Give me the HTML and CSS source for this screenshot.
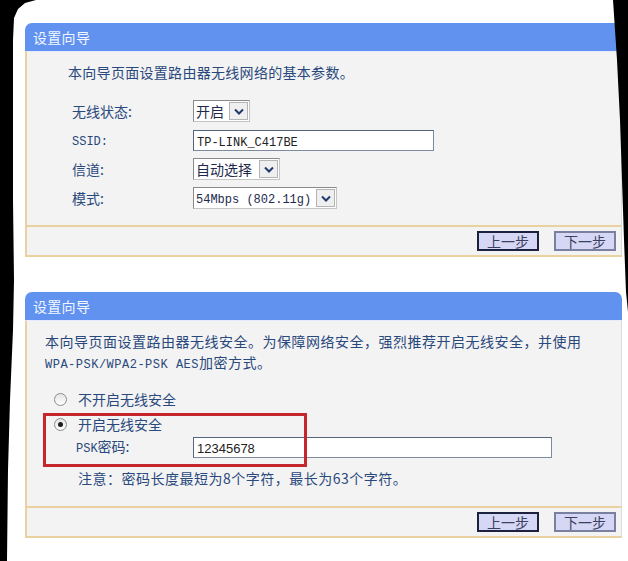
FILE: index.html
```html
<!DOCTYPE html>
<html lang="zh-CN">
<head>
  <meta charset="UTF-8">
  <title>设置向导</title>
  <link rel="stylesheet" href="styles.css">
</head>
<body>

  <div class="page">

    <!-- Step 1: basic wireless settings -->
    <div class="panel">
      <div class="panel-head">设置向导</div>
      <div class="panel-body basic-body">
        <div class="intro">本向导页面设置路由器无线网络的基本参数。</div>
        <div class="form">
          <div class="row">
            <div class="label">无线状态:</div>
            <div class="select sel-state">
              <span class="select-text">开启</span>
              <span class="select-btn"><svg width="10" height="7" viewBox="0 0 10 7"><path d="M1 1.5 L5 5.5 L9 1.5" fill="none" stroke="#1f3a6e" stroke-width="2"/></svg></span>
            </div>
          </div>
          <div class="row">
            <div class="label"><span class="mono">SSID:</span></div>
            <div class="input ssid"><span class="mono">TP-LINK_C417BE</span></div>
          </div>
          <div class="row">
            <div class="label">信道:</div>
            <div class="select sel-channel">
              <span class="select-text">自动选择</span>
              <span class="select-btn"><svg width="10" height="7" viewBox="0 0 10 7"><path d="M1 1.5 L5 5.5 L9 1.5" fill="none" stroke="#1f3a6e" stroke-width="2"/></svg></span>
            </div>
          </div>
          <div class="row">
            <div class="label">模式:</div>
            <div class="select sel-mode">
              <span class="select-text"><span class="mono">54Mbps (802.11g)</span></span>
              <span class="select-btn"><svg width="10" height="7" viewBox="0 0 10 7"><path d="M1 1.5 L5 5.5 L9 1.5" fill="none" stroke="#1f3a6e" stroke-width="2"/></svg></span>
            </div>
          </div>
        </div>
      </div>
      <div class="panel-foot">
        <div class="btn btn-focus">上一步</div>
        <div class="btn">下一步</div>
      </div>
    </div>

    <!-- Step 2: wireless security -->
    <div class="panel">
      <div class="panel-head">设置向导</div>
      <div class="panel-body security-body">
        <div class="intro intro-wide">本向导页面设置路由器无线安全。为保障网络安全，强烈推荐开启无线安全，并使用<br><span class="mono">WPA-PSK/WPA2-PSK AES</span>加密方式。</div>
        <div class="options">
          <div class="option"><span class="radio"></span>不开启无线安全</div>
          <div class="option"><span class="radio checked"></span>开启无线安全</div>
          <div class="row psk-row">
            <div class="label psk-label"><span class="mono">PSK</span>密码:</div>
            <div class="input psk"><span class="digits">12345678</span></div>
          </div>
        </div>
        <div class="note">注意：密码长度最短为8个字符，最长为63个字符。</div>
        <div class="highlight"></div>
      </div>
      <div class="panel-foot">
        <div class="btn btn-focus">上一步</div>
        <div class="btn">下一步</div>
      </div>
    </div>

  </div>

  <!-- dark edges of the photographed screen -->
  <svg class="frame" width="628" height="561" viewBox="0 0 628 561">
    <polygon points="0,0 36,0 25,3 18,9 14,18 13,40 13,100 13,200 14,280 13,330 10,400 8,470 7,561 0,561" fill="#000"/>
    <polygon points="613,0 628,0 628,312 626,292 624,240 622,180 620,120 617,60" fill="#000"/>
  </svg>

</body>
</html>
```

FILE: styles.css
```css
body {
  margin: 0;
  background: #fff;
  font-family: "Noto Sans CJK SC", sans-serif;
  font-size: 14px;
  color: #29487c;
}

.page {
  width: 597px;
  padding: 23px 0 0 25px;
  display: flex;
  flex-direction: column;
  gap: 35px;
}

.mono {
  font-family: "Liberation Mono", monospace;
  font-size: 12px;
}

.panel-head {
  height: 28px;
  line-height: 28px;
  padding-left: 8px;
  background: #6192f0;
  border-radius: 7px 7px 0 0;
  color: #f2f6ff;
  letter-spacing: 0.3px;
}

.panel-body {
  position: relative;
  background: #f3f3f3;
  border-top: 1px solid #e6ecfb;
  border-left: 2px solid #ead1a0;
  border-right: 1px solid #dcdcdc;
}

.basic-body {
  padding: 11px 0 16px 41px;
}

.security-body {
  padding: 10px 0 19px 18px;
}

.intro {
  line-height: 18px;
  letter-spacing: 0.3px;
}

.intro-wide {
  line-height: 21px;
  letter-spacing: 0.5px;
}

.form {
  margin-top: 19px;
  padding-left: 4px;
  display: flex;
  flex-direction: column;
  gap: 7px;
}

.row {
  display: flex;
  align-items: center;
  height: 22px;
}

.label {
  width: 121px;
  line-height: 22px;
}

.select {
  box-sizing: border-box;
  height: 22px;
  display: flex;
  align-items: center;
  justify-content: space-between;
  background: #fff;
  border: 1px solid #8a8a8a;
  border-right-color: #c4c4c4;
  border-bottom-color: #c4c4c4;
  color: #1e2a4c;
}

.select-text {
  padding-left: 2px;
  line-height: 20px;
}

.select-btn {
  box-sizing: border-box;
  width: 19px;
  height: 18px;
  margin-right: 1px;
  display: flex;
  align-items: center;
  justify-content: center;
  background: #efefef;
  border: 1px solid #b4b4b4;
}

.sel-state {
  width: 57px;
}

.sel-channel {
  width: 87px;
}

.sel-mode {
  width: 144px;
}

.input {
  box-sizing: border-box;
  height: 21px;
  line-height: 19px;
  padding-left: 3px;
  background: #fff;
  border: 1px solid #7d8ba0;
  border-top-color: #55657c;
  border-left-color: #55657c;
  color: #222;
}

.ssid {
  width: 241px;
}

.psk {
  width: 359px;
}

.digits {
  font-family: "Liberation Sans", sans-serif;
  font-size: 13px;
}

.options {
  margin-top: 13px;
  padding-left: 9px;
  display: flex;
  flex-direction: column;
  gap: 5px;
}

.option {
  display: flex;
  align-items: center;
  height: 20px;
  gap: 11px;
}

.radio {
  box-sizing: border-box;
  width: 13px;
  height: 13px;
  border-radius: 50%;
  border: 1px solid #8c8c8c;
  background: linear-gradient(#e4e4e4, #fff);
  display: flex;
  align-items: center;
  justify-content: center;
}

.radio.checked::after {
  content: "";
  width: 5px;
  height: 5px;
  border-radius: 50%;
  background: #1d1d1d;
}

.psk-row {
  margin-top: -3px;
  padding-left: 22px;
}

.psk-label {
  width: 117px;
}

.note {
  margin-top: 11px;
  padding-left: 33px;
  line-height: 18px;
  letter-spacing: 0.5px;
}

/* red annotation round the password option */
.highlight {
  position: absolute;
  left: 16px;
  top: 92px;
  width: 264px;
  height: 54px;
  box-sizing: border-box;
  border: 3px solid #c4262b;
}

.panel-foot {
  height: 28px;
  padding-right: 5px;
  display: flex;
  justify-content: flex-end;
  align-items: center;
  gap: 15px;
  background: #f3f3f3;
  border: 2px solid #ead1a0;
  border-right: 1px solid #dcdcdc;
}

.btn {
  box-sizing: border-box;
  width: 62px;
  height: 20px;
  line-height: 16px;
  text-align: center;
  background: #d5d7f4;
  border: 2px solid #7a80a0;
  color: #3a4060;
}

.btn-focus {
  border-color: #1c2140;
}

.frame {
  position: absolute;
  top: 0;
  left: 0;
  pointer-events: none;
}
```
